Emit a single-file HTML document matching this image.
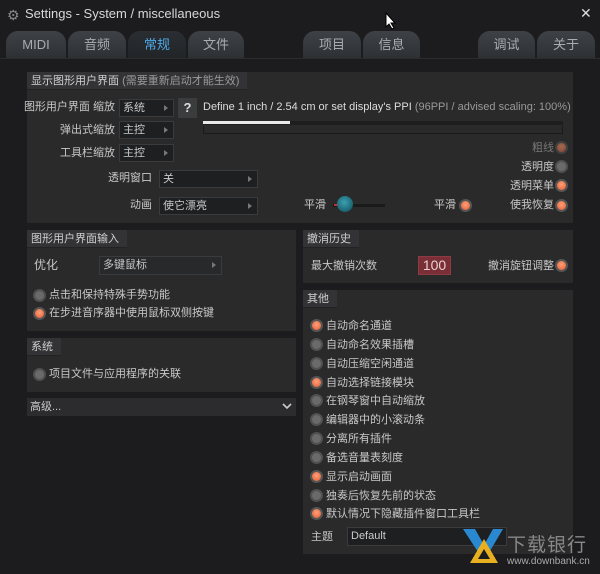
<!DOCTYPE html>
<html><head><meta charset="utf-8"><style>
*{margin:0;padding:0;box-sizing:border-box}
body{width:600px;height:574px;background:#1c1c1e;font-family:"Liberation Sans","Noto Sans CJK SC",sans-serif;color:#c8c8c8;font-size:11px;position:relative;overflow:hidden}
.a{position:absolute;white-space:nowrap}
.pan{position:absolute;background:#2a2a2b}
.hd{position:absolute;left:0;top:0;height:18px;background:#333335;color:#d0d0d0;font-size:11px;line-height:18px;padding:0 8px 0 4px;border-bottom:1px solid #222;white-space:nowrap}
.tab{position:absolute;top:31px;height:27px;background:linear-gradient(#3e4246,#2e3134);border-radius:12px 12px 0 0;color:#a8adb2;font-size:13px;text-align:center;line-height:27px}
.sel{position:absolute;height:18px;background:#1e1f21;border:1px solid #3a3b3d;color:#c8c8c8;font-size:11px;line-height:16px;padding-left:3px;white-space:nowrap}
.sel:after{content:"";position:absolute;right:5px;top:5px;border-left:4px solid #777;border-top:3px solid transparent;border-bottom:3px solid transparent}
.r{position:absolute;width:13px;height:13px;border-radius:50%;border:2px solid #505050;background:#6a6a6a}
.r.o{background:radial-gradient(circle at 50% 40%,#ffa07a,#e05a30);border-color:#555}
.lbl{position:absolute;white-space:nowrap;font-size:11px;color:#c8c8c8;line-height:13px}
.rt{text-align:right}
</style></head><body>
<div class="a" style="left:7px;top:7px;font-size:14px;color:#8a8a8a">⚙</div>
<div class="a" style="left:25px;top:6px;font-size:13px;color:#d8d8d8">Settings - System / miscellaneous</div>
<div class="a" style="left:580px;top:5px;font-size:14px;color:#ddd">✕</div>
<svg class="a" style="left:385px;top:12px" width="12" height="18"><path d="M1 1 L1 15 L4 12 L7 17 L9 16 L6 11 L10 11 Z" fill="#fff" stroke="#000" stroke-width="1"/></svg>

<div class="tab" style="left:6px;width:60px">MIDI</div>
<div class="tab" style="left:68px;width:58px">音频</div>
<div class="tab" style="left:128px;width:58px;color:#4fa8e8;background:linear-gradient(#2a2e32,#222528)">常规</div>
<div class="tab" style="left:188px;width:56px">文件</div>
<div class="tab" style="left:303px;width:58px">项目</div>
<div class="tab" style="left:363px;width:57px">信息</div>
<div class="tab" style="left:478px;width:57px">调试</div>
<div class="tab" style="left:537px;width:58px">关于</div>
<div class="a" style="left:0;top:58px;width:600px;height:1px;background:#2a2c2e"></div>

<div class="pan" style="left:27px;top:72px;width:546px;height:151px">
<div class="hd">显示图形用户界面 <span style="color:#9a9a9a">(需要重新启动才能生效)</span></div>
</div>
<div class="lbl rt" style="right:485px;top:101px">图形用户界面 缩放</div>
<div class="sel" style="left:119px;top:99px;width:55px">系统</div>
<div class="a" style="left:178px;top:98px;width:19px;height:20px;background:#3a3c3e;color:#ddd;font-size:13px;font-weight:bold;text-align:center;line-height:20px">?</div>
<div class="a" style="left:203px;top:101px;font-size:11px;color:#ddd">Define 1 inch / 2.54 cm or set display's PPI <span style="color:#999">(96PPI / advised scaling: 100%)</span></div>
<div class="a" style="left:203px;top:121px;width:360px;height:4px;background:#1e1e1f"></div>
<div class="a" style="left:203px;top:121px;width:87px;height:3px;background:#e8e8e8"></div>
<div class="a" style="left:203px;top:126px;width:360px;height:8px;border:1px solid #1a1a1a;border-top:none"></div>
<div class="lbl rt" style="right:485px;top:124px">弹出式缩放</div>
<div class="sel" style="left:119px;top:121px;width:55px">主控</div>
<div class="lbl rt" style="right:485px;top:147px">工具栏缩放</div>
<div class="sel" style="left:119px;top:144px;width:55px">主控</div>
<div class="lbl rt" style="right:448px;top:172px">透明窗口</div>
<div class="sel" style="left:159px;top:170px;width:99px">关</div>
<div class="lbl rt" style="right:448px;top:199px">动画</div>
<div class="sel" style="left:159px;top:197px;width:99px">使它漂亮</div>
<div class="lbl" style="left:304px;top:199px">平滑</div>
<div class="a" style="left:333px;top:204px;width:52px;height:3px;background:#1a1a1a"></div>
<div class="a" style="left:334px;top:204px;width:6px;height:2px;background:#c03030"></div>
<div class="a" style="left:337px;top:196px;width:16px;height:16px;border-radius:50%;background:radial-gradient(circle at 45% 40%,#3aa0b0,#0e4a58)"></div>
<div class="lbl rt" style="right:144px;top:199px">平滑</div>
<div class="r o" style="left:459px;top:199px"></div>
<div class="lbl rt" style="right:46px;top:142px;color:#777">粗线</div>
<div class="r o" style="left:555px;top:141px;opacity:.55"></div>
<div class="lbl rt" style="right:46px;top:161px">透明度</div>
<div class="r" style="left:555px;top:160px"></div>
<div class="lbl rt" style="right:46px;top:180px">透明菜单</div>
<div class="r o" style="left:555px;top:179px"></div>
<div class="lbl rt" style="right:46px;top:199px">使我恢复</div>
<div class="r o" style="left:555px;top:199px"></div>

<div class="pan" style="left:27px;top:230px;width:269px;height:101px"><div class="hd">图形用户界面输入</div></div>
<div class="lbl" style="left:34px;top:259px;font-size:12px">优化</div>
<div class="sel" style="left:99px;top:256px;width:123px;height:19px;background:#28292b">多键鼠标</div>
<div class="r" style="left:33px;top:289px"></div>
<div class="lbl" style="left:49px;top:289px">点击和保持特殊手势功能</div>
<div class="r o" style="left:33px;top:307px"></div>
<div class="lbl" style="left:49px;top:307px">在步进音序器中使用鼠标双侧按键</div>

<div class="pan" style="left:27px;top:338px;width:269px;height:54px"><div class="hd">系统</div></div>
<div class="r" style="left:33px;top:368px"></div>
<div class="lbl" style="left:49px;top:368px">项目文件与应用程序的关联</div>

<div class="pan" style="left:27px;top:398px;width:269px;height:18px;background:#2c2c2e"></div>
<div class="lbl" style="left:30px;top:401px">高级...</div>
<svg class="a" style="left:282px;top:403px" width="10" height="7"><path d="M1 1 L5 5 L9 1" stroke="#ccc" stroke-width="1.6" fill="none"/></svg>

<div class="pan" style="left:303px;top:230px;width:270px;height:53px"><div class="hd">撤消历史</div></div>
<div class="lbl" style="left:311px;top:260px">最大撤销次数</div>
<div class="a" style="left:418px;top:256px;width:33px;height:19px;background:#7a2e36;border:1px solid #8e3a44;color:#e8d0d0;font-size:14px;text-align:center;line-height:17px">100</div>
<div class="lbl rt" style="right:46px;top:260px">撤消旋钮调整</div>
<div class="r o" style="left:555px;top:259px"></div>

<div class="pan" style="left:303px;top:290px;width:270px;height:264px"><div class="hd">其他</div></div>
<div class="r o" style="left:310px;top:319px"></div><div class="lbl" style="left:326px;top:320px">自动命名通道</div>
<div class="r" style="left:310px;top:338px"></div><div class="lbl" style="left:326px;top:339px">自动命名效果插槽</div>
<div class="r" style="left:310px;top:357px"></div><div class="lbl" style="left:326px;top:358px">自动压缩空闲通道</div>
<div class="r o" style="left:310px;top:376px"></div><div class="lbl" style="left:326px;top:377px">自动选择链接模块</div>
<div class="r" style="left:310px;top:394px"></div><div class="lbl" style="left:326px;top:395px">在钢琴窗中自动缩放</div>
<div class="r" style="left:310px;top:413px"></div><div class="lbl" style="left:326px;top:414px">编辑器中的小滚动条</div>
<div class="r" style="left:310px;top:432px"></div><div class="lbl" style="left:326px;top:433px">分离所有插件</div>
<div class="r" style="left:310px;top:451px"></div><div class="lbl" style="left:326px;top:452px">备选音量表刻度</div>
<div class="r o" style="left:310px;top:470px"></div><div class="lbl" style="left:326px;top:471px">显示启动画面</div>
<div class="r" style="left:310px;top:489px"></div><div class="lbl" style="left:326px;top:490px">独奏后恢复先前的状态</div>
<div class="r o" style="left:310px;top:507px"></div><div class="lbl" style="left:326px;top:508px">默认情况下隐藏插件窗口工具栏</div>
<div class="lbl" style="left:311px;top:531px">主题</div>
<div class="a" style="left:347px;top:527px;width:160px;height:19px;background:#1e1f21;border:1px solid #3a3b3d;font-size:11px;line-height:17px;padding-left:3px;color:#ccc">Default</div>

<svg class="a" style="left:463px;top:527px" width="42" height="38"><polygon points="0,2 12,2 21,18 30,2 40,2 21,34" fill="#2a88d0"/><polygon points="21,12 35,36 7,36" fill="#e8b020"/><polygon points="21,22 27,32 15,32" fill="#1c1c1e"/></svg>
<div class="a" style="left:507px;top:530px;font-size:19px;color:#888;letter-spacing:1px">下载银行</div>
<div class="a" style="left:507px;top:556px;font-size:10px;color:#aaa">www.downbank.cn</div>
</body></html>
